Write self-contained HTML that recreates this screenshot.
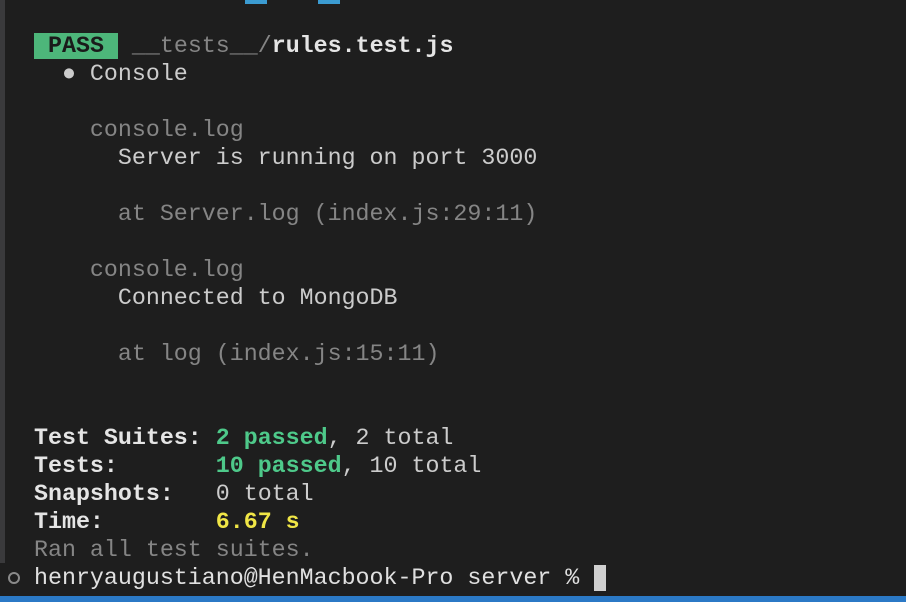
<!DOCTYPE html>
<html><head><meta charset="utf-8"><style>
html,body{margin:0;padding:0;}
body{width:906px;height:602px;background:#1e1e1e;position:relative;overflow:hidden;font-family:"Liberation Mono","DejaVu Sans Mono",monospace;font-size:23.3px;color:#cccccc;}
.l{position:absolute;left:34px;height:28px;line-height:28px;white-space:pre;}
.g{color:#858585}.b{font-weight:bold;color:#e5e5e5}.gr{color:#4ec98a;font-weight:bold}.y{color:#f0e646;font-weight:bold}
.pass{background:#4db67a;color:#1a1a1a;font-weight:bold;display:inline-block;height:26px;line-height:26px;padding:0 14px 0 14px;}
</style></head><body>
<div style="position:absolute;left:0;top:0;width:5px;height:563px;background:#3a3a3c"></div>
<div style="position:absolute;left:245px;top:0;width:22px;height:4px;background:#3b9bd1"></div>
<div style="position:absolute;left:318px;top:0;width:22px;height:4px;background:#3b9bd1"></div>
<div class="l" style="top:32px;left:34px"><span class="pass">PASS</span> <span class="g">__tests__/</span><span class="b">rules.test.js</span></div>
<div class="l" style="top:60px">  ● Console</div>
<div class="l g" style="top:116px">    console.log</div>
<div class="l" style="top:144px">      Server is running on port 3000</div>
<div class="l g" style="top:200px">      at Server.log (index.js:29:11)</div>
<div class="l g" style="top:256px">    console.log</div>
<div class="l" style="top:284px">      Connected to MongoDB</div>
<div class="l g" style="top:340px">      at log (index.js:15:11)</div>
<div class="l" style="top:424px"><span class="b">Test Suites: </span><span class="gr">2 passed</span>, 2 total</div>
<div class="l" style="top:452px"><span class="b">Tests:       </span><span class="gr">10 passed</span>, 10 total</div>
<div class="l" style="top:480px"><span class="b">Snapshots:   </span>0 total</div>
<div class="l" style="top:508px"><span class="b">Time:        </span><span class="y">6.67 s</span></div>
<div class="l g" style="top:536px">Ran all test suites.</div>
<div style="position:absolute;left:8px;top:572px;width:9px;height:9px;border:2px solid #8a8a8a;border-radius:50%;box-sizing:border-box;width:12px;height:12px"></div>
<div class="l" style="top:564px;color:#e0e0e0">henryaugustiano@HenMacbook-Pro server % </div>
<div style="position:absolute;left:594px;top:565px;width:12px;height:26px;background:#d0d0d0"></div>
<div style="position:absolute;left:0;top:596px;width:906px;height:6px;background:#2b79c6"></div>
</body></html>
